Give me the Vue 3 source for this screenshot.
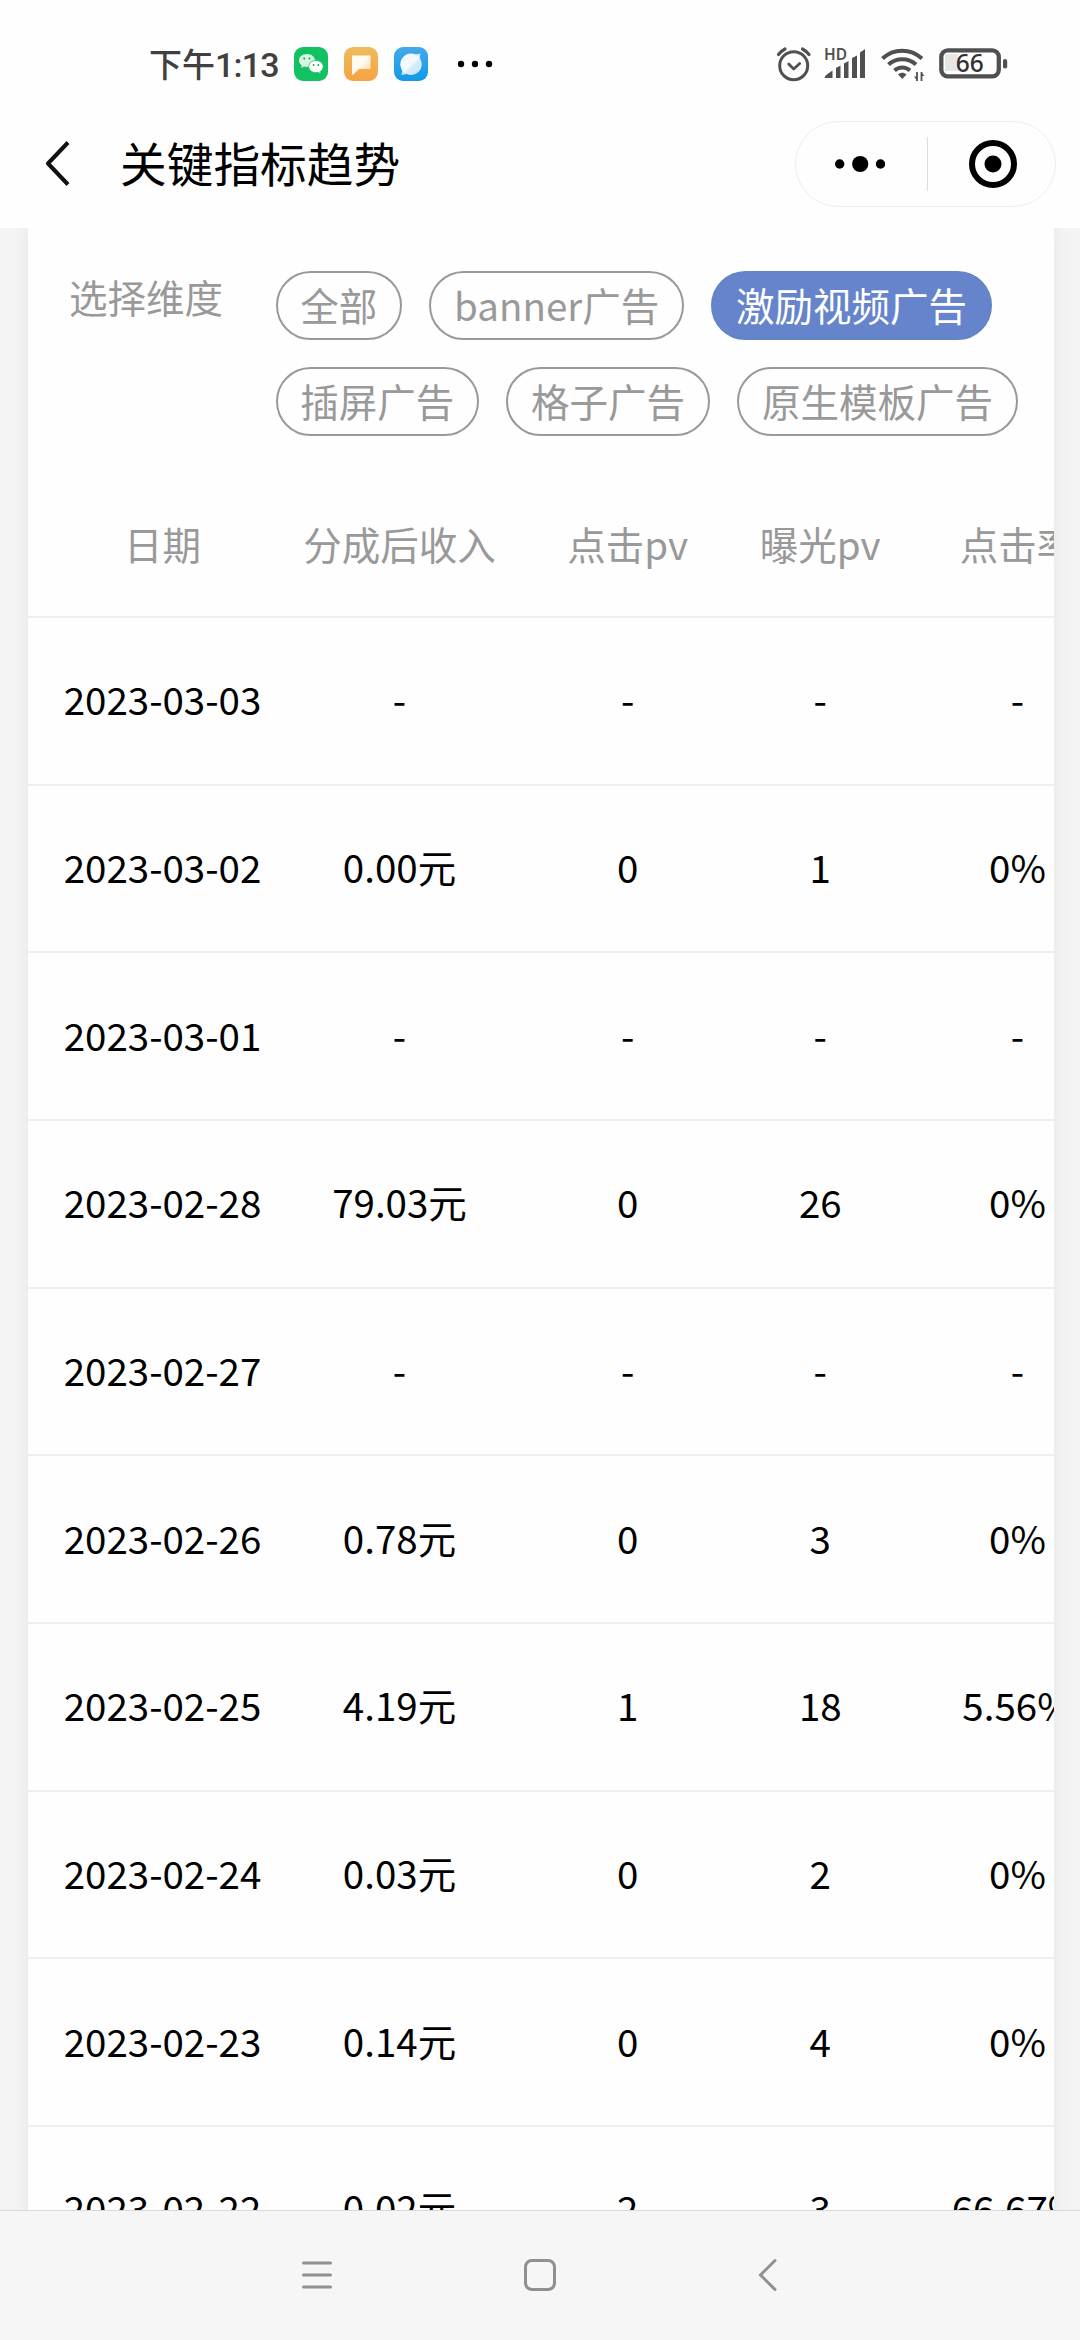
<script setup>
const filterRows = [
  [{ label: '全部' }, { label: 'banner广告' }, { label: '激励视频广告', active: true }],
  [{ label: '插屏广告' }, { label: '格子广告' }, { label: '原生模板广告' }]
]

const headers = ['日期', '分成后收入', '点击pv', '曝光pv', '点击率']

const rows = [
  ['2023-03-03', '-', '-', '-', '-'],
  ['2023-03-02', '0.00元', '0', '1', '0%'],
  ['2023-03-01', '-', '-', '-', '-'],
  ['2023-02-28', '79.03元', '0', '26', '0%'],
  ['2023-02-27', '-', '-', '-', '-'],
  ['2023-02-26', '0.78元', '0', '3', '0%'],
  ['2023-02-25', '4.19元', '1', '18', '5.56%'],
  ['2023-02-24', '0.03元', '0', '2', '0%'],
  ['2023-02-23', '0.14元', '0', '4', '0%'],
  ['2023-02-22', '0.02元', '2', '3', '66.67%']
]
</script>

<template>
  <div class="screen">
    <header class="status-bar">
      <span class="clock">下午<b>1:13</b></span>
      <div class="apps">
        <svg width="34" height="34" viewBox="0 0 34 34">
          <rect width="34" height="34" rx="9" fill="#12c162" />
          <path d="M13 7c-4.600 0-8 2.900-8 6.500 0 2 1.100 3.800 2.900 5L7.200 21l2.900-1.500c.9.300 1.900.4 2.900.4 4.500 0 8-2.900 8-6.400C21 9.900 17.500 7 13 7z" fill="#d7f5e2" />
          <path d="M22 13.500c-4.200 0-7.300 2.700-7.300 6.100s3.100 6.100 7.300 6.100c.8 0 1.600-.1 2.300-.3l2.700 1.300-.6-2.200c1.800-1.200 2.800-2.900 2.800-4.900 0-3.400-3.100-6.100-7.200-6.100z" fill="#fff" stroke="#12c162" stroke-width=".8" />
          <g fill="#12a356"><circle cx="10.200" cy="11.500" r="1" /><circle cx="15.500" cy="11.500" r="1" /><circle cx="19.600" cy="18" r=".9" /><circle cx="24.300" cy="18" r=".9" /></g>
        </svg>
        <svg width="34" height="34" viewBox="0 0 34 34">
          <defs>
            <linearGradient id="orange" x1="0" y1="0" x2="0" y2="1"><stop offset="0" stop-color="#eebc5c" /><stop offset="1" stop-color="#f5a244" /></linearGradient>
            <linearGradient id="bubble" x1="0" y1="0" x2="1" y2="1"><stop offset=".45" stop-color="#fffaf2" /><stop offset="1" stop-color="#fbd09a" /></linearGradient>
          </defs>
          <rect width="34" height="34" rx="9" fill="url(#orange)" />
          <path d="M8 8.500h18.500V22H15l-5.600 5.500H8z" fill="url(#bubble)" />
        </svg>
        <svg width="34" height="34" viewBox="0 0 34 34">
          <defs>
            <linearGradient id="blue" x1="0" y1="0" x2="0" y2="1"><stop offset="0" stop-color="#45a9ea" /><stop offset="1" stop-color="#109ae9" /></linearGradient>
            <linearGradient id="planet" x1="0" y1="0" x2="1" y2="1"><stop offset=".5" stop-color="#f3faff" /><stop offset=".6" stop-color="#d3ecfc" /><stop offset="1" stop-color="#c4e5fa" /></linearGradient>
          </defs>
          <rect width="34" height="34" rx="9" fill="url(#blue)" />
          <path d="M21 7.600l5.500-1-.8 5.200zM13 27l-5.500 1 .8-5.200z" fill="#cbe8fb" />
          <circle cx="17" cy="17.300" r="10.700" fill="url(#planet)" />
        </svg>
      </div>
      <svg class="more" width="36" height="10" viewBox="0 0 36 10">
        <circle cx="4" cy="5" r="3.200" /><circle cx="18" cy="5" r="3.200" /><circle cx="32" cy="5" r="3.200" />
      </svg>

      <div class="system">
        <svg width="36" height="36" viewBox="0 0 36 36" fill="none" stroke="#505050" stroke-linecap="round">
          <circle cx="17.700" cy="19.700" r="14" stroke-width="3" />
          <path d="M12.700 18l5 5 6-5.500" stroke-width="2.800" stroke-linejoin="round" />
          <path d="M2.500 8.500C4.500 6 6.500 4.300 9 3M26.500 3c2.500 1.300 4.500 3 6.500 5.500" stroke-width="3.200" />
        </svg>
        <div class="signal">
          <svg width="42" height="36" viewBox="0 0 42 36" fill="#505050">
            <path d="M.5 31.500Q.8 29.500 8.500 24.500v7.500H1.500zM12 22l4.500-2.500V32H12zM20 17.500l4.500-2.500v17H20zM28 12l5-2.500V32h-5zM36 6.500L41 3v29h-5z" />
          </svg>
          <span class="hd">HD</span>
        </div>
        <svg class="wifi" width="44" height="36" viewBox="0 0 44 36" fill="none" stroke="#505050" stroke-width="4">
          <path d="M1.500 12.500c11-10.500 28-10.500 39.500 0M7.500 18.500c7.500-7 20-7 27.500 0M13.500 24.500c4.500-4 11-4 15.500 0" />
          <path d="M17 28.500c2.500-2.300 6-2.300 8.500 0l-4.200 4.500z" fill="#505050" stroke="none" />
          <path d="M36 26v9M40.500 26v9" stroke-width="1.800" /><path d="M33 30.500l3 4v-4zM43.500 30l-3-3.500V30z" fill="#505050" stroke="none" />
        </svg>
        <svg class="battery" width="70" height="36" viewBox="0 0 70 36">
          <rect x="6" y="8" width="13" height="17" fill="#e6e6e6" />
          <rect x="2.300" y="4.300" width="57.500" height="26" rx="6.500" fill="none" stroke="#505050" stroke-width="4.300" />
          <rect x="64" y="13" width="4.200" height="9.500" rx="2" fill="#505050" />
          <text x="30.700" y="25.600" text-anchor="middle" class="level">66</text>
        </svg>
      </div>
    </header>

    <nav class="title-bar">
      <svg class="back" width="26" height="50" viewBox="0 0 26 50" fill="none" stroke="#111" stroke-width="4" stroke-linejoin="round">
        <path d="M23 3.500L3 24.500 23 45.500" />
      </svg>
      <h1>关键指标趋势</h1>
      <div class="capsule">
        <svg width="50" height="20" viewBox="0 0 50 20"><circle cx="4.700" cy="10" r="4.700" /><circle cx="25.200" cy="10" r="8.100" /><circle cx="45.500" cy="10" r="4.700" /></svg>
        <i></i>
        <svg class="target" width="48" height="48" viewBox="0 0 48 48"><circle cx="24" cy="24" r="21" fill="none" stroke="#000" stroke-width="6" /><circle cx="24" cy="24" r="8.500" /></svg>
      </div>
    </nav>

    <main class="content">
      <section class="card">
        <div class="filter">
          <span class="filter-label">选择维度</span>
          <div class="chips">
            <div v-for="(group, g) in filterRows" :key="g" class="chip-row">
              <span v-for="chip in group" :key="chip.label" class="chip" :class="{ active: chip.active }">{{ chip.label }}</span>
            </div>
          </div>
        </div>
        <div class="table">
          <div class="row head">
            <span v-for="h in headers" :key="h">{{ h }}</span>
          </div>
          <div v-for="row in rows" :key="row[0]" class="row">
            <span v-for="(cell, c) in row" :key="c">{{ cell }}</span>
          </div>
        </div>
      </section>
    </main>

    <footer class="nav-bar">
      <svg width="30" height="34" viewBox="0 0 30 34" stroke="#909090" stroke-width="3" stroke-linecap="round"><path d="M1.500 5h27M1.500 17h27M1.500 29h27" /></svg>
      <svg class="home" width="34" height="34" viewBox="0 0 34 34" fill="none" stroke="#909090" stroke-width="3"><rect x="2.500" y="2.500" width="29" height="29" rx="6.500" /></svg>
      <svg class="nav-back" width="20" height="34" viewBox="0 0 20 34" fill="none" stroke="#909090" stroke-width="3" stroke-linecap="round"><path d="M17 2.500L2.500 17 17 31.500" /></svg>
    </footer>
  </div>
</template>

<style>
body { margin: 0; background: #fefefe; }
</style>

<style scoped>
.screen {
  width: 1080px;
  height: 2340px;
  display: flex;
  flex-direction: column;
  overflow: hidden;
  background: #fefefe;
  color: #000;
  font-family: "Noto Sans CJK SC", sans-serif;
}
svg { display: block; flex: none; }

.status-bar {
  height: 100px;
  flex: none;
  box-sizing: border-box;
  padding: 28px 71px 0 149px;
  display: flex;
  align-items: center;
}
.clock { width: 145px; font-size: 33px; font-weight: 500; line-height: 40px; color: #404040; white-space: nowrap; }
.clock b { font-family: Roboto, sans-serif; font-weight: 500; font-size: 34px; letter-spacing: -0.8px; }
.apps { display: flex; gap: 16px; }
.more { margin-left: 29px; }
.system { display: flex; margin-left: auto; }
.signal { position: relative; margin-left: 12px; }
.wifi { margin-left: 15px; }
.battery { margin-left: 14px; }
.hd {
  position: absolute;
  left: 0;
  top: -4px;
  font: 600 15.500px/24px "Noto Sans", sans-serif;
  color: #505050;
}
.level { font: 500 24.500px "Noto Sans", sans-serif; fill: #303030; }

.title-bar {
  height: 128px;
  flex: none;
  box-sizing: border-box;
  padding: 21px 24px 21px 45px;
  display: flex;
  align-items: center;
}
h1 { margin: 0 0 4px 49px; font-size: 46.700px; font-weight: 400; line-height: 60px; }
.capsule {
  width: 261px;
  height: 86px;
  box-sizing: border-box;
  margin-left: auto;
  border: 1.500px solid #eee;
  border-radius: 43px;
  padding: 0 38px 0 39px;
  display: flex;
  align-items: center;
  justify-content: space-between;
}
.capsule i { width: 1px; height: 54px; background: #ddd; }

.content {
  flex: 1;
  min-height: 0;
  overflow: hidden;
  background: #f4f4f4;
  padding: 0 26px 0 28px;
}
.card {
  height: 2100px;
  background: #fefefe;
  box-shadow: 0 0 14px 4px rgba(20, 20, 50, 0.045);
}
.filter {
  height: 221px;
  box-sizing: border-box;
  padding: 43px 0 0 41px;
  display: flex;
  color: #999;
  font-size: 38.500px;
}
.filter-label { width: 206.500px; flex: none; line-height: 51px; }
.chips { display: flex; flex-direction: column; gap: 27px; }
.chip-row { display: flex; gap: 27.500px; }
.chip {
  height: 69px;
  box-sizing: border-box;
  border: 2px solid #999;
  border-radius: 35px;
  padding: 0 22.700px;
  line-height: 63px;
  white-space: nowrap;
}
.chip.active { background: #6684cb; border-color: #6684c4; color: #fff; }

.table { overflow: hidden; }
.row {
  width: 1118px;
  height: 167.670px;
  box-sizing: border-box;
  border-bottom: 2px solid #eee;
  padding: 0 0 5px 29.500px;
  display: grid;
  grid-template-columns: 210px 264px 192.500px 192.500px 202px;
  align-items: center;
  text-align: center;
  font-size: 38.500px;
  line-height: 56px;
  white-space: nowrap;
}
.row.head { height: 169px; color: #999; padding-top: 21px; padding-bottom: 0; }

.nav-bar {
  height: 130px;
  flex: none;
  box-sizing: border-box;
  border-top: 1px solid #d9d9d9;
  background: #f6f6f6;
  padding: 0 302px 2px;
  display: flex;
  align-items: center;
}
.home { margin-left: 191px; }
.nav-back { margin-left: 201px; }
</style>
